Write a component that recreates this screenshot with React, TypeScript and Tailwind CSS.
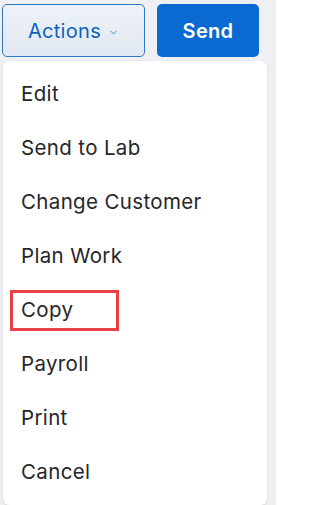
import { ChevronDown } from 'lucide-react';

const items = ['Edit', 'Send to Lab', 'Change Customer', 'Plan Work', 'Copy', 'Payroll', 'Print', 'Cancel'];

export default function App() {
  return (
    <div
      className="w-[276px] h-[505px] overflow-hidden bg-[#eef0f3] pt-[4px]"
      style={{ fontFamily: 'Inter, "Noto Sans", sans-serif' }}
    >
      <div className="flex gap-3 pl-[2px]">
        <button className="flex h-[53px] w-[143px] items-center justify-center gap-[7px] rounded-[5px] border border-[#2a78c8] bg-gradient-to-b from-[#eef2f8] to-[#e2e8f1] text-[20px] tracking-[0.3px] text-[#0b63c1]">
          Actions
          <ChevronDown size={11} strokeWidth={1.5} className="mt-1" />
        </button>
        <button className="h-[53px] w-[102px] rounded-[5px] bg-[#0a6ad2] text-[20px] font-semibold tracking-[0.3px] text-white">
          Send
        </button>
      </div>
      <div className="ml-[3px] mt-[4px] w-[264px] rounded-[6px] bg-white py-[6px] shadow-sm">
        {items.map((item) => (
          <div key={item} className="flex h-[54px] items-center pl-[18px]">
            <span
              className={
                item === 'Copy'
                  ? '-ml-[11px] flex h-[41px] w-[109px] items-center border-[3px] border-[#ea3f45] pl-[8px] text-[20.5px] tracking-[0.35px] text-[#26262b]'
                  : 'text-[20.5px] tracking-[0.35px] text-[#26262b]'
              }
            >
              {item}
            </span>
          </div>
        ))}
      </div>
    </div>
  );
}
